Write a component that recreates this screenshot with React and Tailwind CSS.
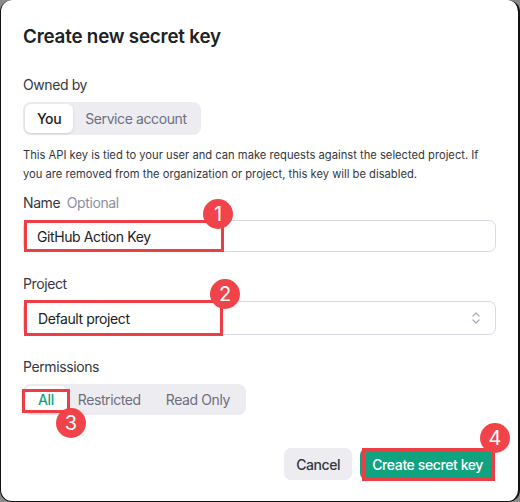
import React from "react";

function Badge({ n, className }) {
  return (
    <div
      className={
        "absolute flex h-[30px] w-[30px] items-center justify-center rounded-full bg-[#f0444a] text-[20px] font-normal leading-none tracking-normal text-white " +
        className
      }
    >
      {n}
    </div>
  );
}

function RedBox({ className }) {
  return <div className={"pointer-events-none absolute border-[3px] border-[#ee3e45] " + className} />;
}

export default function App() {
  return (
    <div className="h-[502px] w-[520px] bg-[#8a8a8a]" style={{ fontFamily: "Inter, 'Liberation Sans', sans-serif" }}>
      <div className="relative flex h-full w-full flex-col rounded-[12px] border-b border-l border-r-2 border-[#111] bg-white px-[22px] pt-[24px] text-[14px] tracking-[-0.4px] text-[#353740]">
        <h1 className="text-[18.8px] font-semibold leading-[26px] tracking-[-0.2px] text-[#202123]">Create new secret key</h1>

        <div className="mt-[25px] leading-[20px]">Owned by</div>
        <div className="mt-[7px] flex w-fit rounded-[8px] bg-[#ececf1] p-[2px]">
          <div className="flex h-[29px] items-center rounded-[6px] bg-white px-[12px] font-medium text-[#202123] shadow-sm">You</div>
          <div className="flex h-[29px] items-center px-[12px] text-[#6e6e80]">Service account</div>
        </div>

        <p className="mt-[11px] text-[11.2px] leading-[19px] tracking-normal text-[#353740]">
          This API key is tied to your user and can make requests against the selected project. If you are removed from the organization or project, this key will be disabled.
        </p>

        <div className="mt-[9px] leading-[20px]">
          Name <span className="ml-[3px] text-[#8e8ea0]">Optional</span>
        </div>
        <div className="relative mt-[7px]">
          <div className="flex h-[32px] items-center rounded-[7px] border border-[#d9d9e3] px-[13px] text-[#202123]">
            GitHub Action Key
          </div>
          <RedBox className="left-[1px] top-0 h-[32px] w-[200px]" />
          <Badge n="1" className="left-[180px] top-[-21px]" />
        </div>

        <div className="mt-[22px] leading-[20px]">Project</div>
        <div className="relative mt-[7px]">
          <div className="flex h-[34px] items-center justify-between rounded-[7px] border border-[#d9d9e3] px-[14px] text-[#202123]">
            <span>Default project</span>
            <svg width="10" height="14" viewBox="0 0 10 14" fill="none" stroke="#acacbe" strokeWidth="1.3" strokeLinecap="round" strokeLinejoin="round">
              <path d="M2 5l3-3 3 3" />
              <path d="M2 9l3 3 3-3" />
            </svg>
          </div>
          <RedBox className="left-[1px] top-[-1px] h-[36px] w-[199px]" />
          <Badge n="2" className="left-[187px] top-[-22px]" />
        </div>

        <div className="mt-[22px] leading-[20px]">Permissions</div>
        <div className="relative mt-[7px] flex w-fit rounded-[8px] bg-[#ececf1] p-[2px]">
          <div className="flex h-[27px] items-center rounded-[6px] bg-white px-[13px] font-medium text-[#10a37f] shadow-sm">All</div>
          <div className="flex h-[27px] items-center px-[11px] text-[#6e6e80]">Restricted</div>
          <div className="flex h-[27px] items-center px-[14px] text-[#6e6e80]">Read Only</div>
          <RedBox className="left-[-1px] top-[5px] h-[24px] w-[48px]" />
          <Badge n="3" className="left-[33px] top-[24px]" />
        </div>

        <div className="mt-[33px] flex justify-end gap-[8px] pr-[1px]">
          <div className="flex h-[32px] items-center rounded-[7px] bg-[#ececf1] px-[12px] font-medium text-[#353740]">Cancel</div>
          <div className="relative flex h-[32px] items-center rounded-[7px] bg-[#10a37f] px-[12px] font-medium text-white">
            Create secret key
            <RedBox className="inset-0 -bottom-px left-[2px]" />
            <Badge n="4" className="right-[-15px] top-[-25px]" />
          </div>
        </div>
      </div>
    </div>
  );
}
